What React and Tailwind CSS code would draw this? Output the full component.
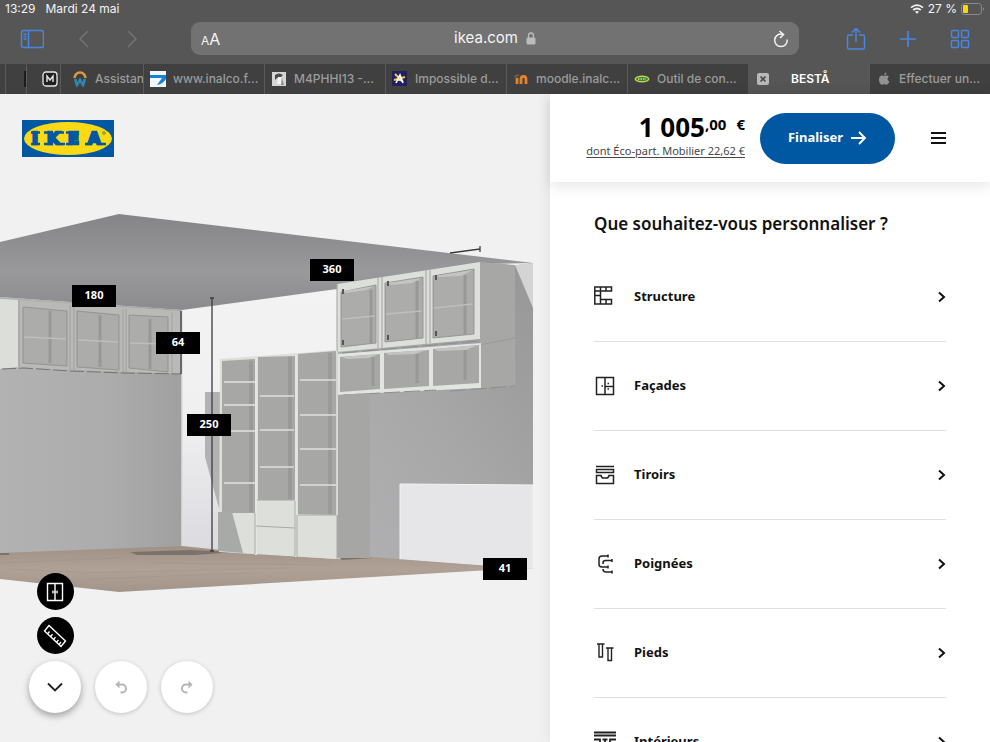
import clsx from 'clsx'

const TABS = [
  { label: 'www.inalco.f...', icon: 'inalco' },
  { label: 'M4PHHI13 -...', icon: 'statue' },
  { label: 'Impossible d...', icon: 'star' },
  { label: 'moodle.inalc...', icon: 'moodle' },
  { label: 'Outil de con...', icon: 'ikea' },
  { label: 'BESTÅ', icon: 'close', active: true },
  { label: 'Effectuer un...', icon: 'apple' },
]

const OPTIONS = ['Structure', 'Façades', 'Tiroirs', 'Poignées', 'Pieds', 'Intérieurs']

const PINS = [
  { x: 72, y: 285, label: '180' },
  { x: 310, y: 259, label: '360' },
  { x: 156, y: 332, label: '64' },
  { x: 187, y: 414, label: '250' },
  { x: 483, y: 558, label: '41' },
]

// open compartments and glass panes, as polygon points
const GLASS = [
  '23,307 67,311 67,366 23,363',
  '77,311 119,315 119,370 77,367',
  '129,315 168,317 168,372 129,368',
  '341,292 376,285 376,343 341,347',
  '385,283 423,277 423,338 385,342',
  '433,276 474,269 474,334 433,338',
]

const NICHES = [
  '340,357 380,354 380,389 340,392',
  '384,353 429,350 429,386 384,389',
  '433,349 479,345 479,383 433,386',
  '222,361 255,359 255,513 222,513',
  '258,357 295,356 295,500 258,500',
  '298,354 336,351 336,515 298,514',
]

const SHELVES = [
  [224, 255, 382], [224, 255, 405], [224, 255, 431], [224, 255, 483],
  [260, 294, 396], [260, 294, 430], [260, 294, 467],
  [300, 336, 380], [300, 336, 415], [300, 336, 449], [300, 336, 485],
]

function Favicon({ name }) {
  return (
    <svg viewBox="0 0 16 16" className="size-4 shrink-0">
      {name === 'inalco' && (
        <>
          <path d="M0 0h16v16H0z" fill="#f4f7fa" />
          <path d="M0 4h16v4q-3 5-9 6l5-7H0z" fill="#1583d2" />
        </>
      )}
      {name === 'statue' && (
        <>
          <path d="M1 1h14v14H1z" fill="#d5d5d5" />
          <path d="M4 4q4-3 8 0l-2 2H9l-3 1-2 2z" fill="#4a4a4a" />
          <path d="M7 6h3v7H6z" fill="#f3f3f3" />
          <path d="m11 7 2 7h-3z" fill="#8d8d8d" />
        </>
      )}
      {name === 'star' && (
        <>
          <path d="M0 0h15v15H0z" fill="#20215f" />
          <path d="m3 3 8 8M2 9l11-3" stroke="#f3c64b" strokeWidth="2" />
          <path d="m4 12 4-8 3 8M5 9h5" stroke="#fff" strokeWidth="1.600" fill="none" />
        </>
      )}
      {name === 'moodle' && (
        <>
          <path d="M4 13V7M8 13V8q0-2.500 2.500-2.500T13 8v5" stroke="#e8832a" strokeWidth="2.800" fill="none" />
          <path d="m0 6 4-3 3 1-4 3z" fill="#6b5a50" />
        </>
      )}
      {name === 'ikea' && (
        <>
          <ellipse cx="8" cy="8" rx="7.500" ry="3.500" fill="#c9d43a" />
          <ellipse cx="8" cy="8" rx="6" ry="2" fill="#2f7d55" />
          <path d="M4 8h8" stroke="#dfe04a" strokeWidth="1.500" strokeDasharray="1.500 1" />
        </>
      )}
      {name === 'close' && (
        <>
          <rect x="2" y="2" width="12" height="12" rx="2" fill="#b9b9b9" />
          <path d="m5.500 5.500 5 5m0-5-5 5" stroke="#4c4c4c" strokeWidth="1.700" />
        </>
      )}
      {name === 'apple' && (
        <path
          d="M10.500 1.500c0 1.500-1 2.700-2.500 2.800 0-1.500 1-2.600 2.500-2.800zM8 5c.8 0 1.500-.6 2.600-.6 1 0 1.900.5 2.400 1.200-2 1.200-1.700 4 .3 4.800-.5 1.500-1.700 3.300-2.900 3.300-.9 0-1.200-.5-2.300-.5s-1.500.5-2.300.5C4.300 13.700 3 11 3 8.600c0-2.500 1.500-4.100 3.100-4.100C7 4.500 7.500 5 8 5z"
          fill="#929292"
        />
      )}
    </svg>
  )
}

function StatusBar() {
  return (
    <div className="flex h-[18px] items-center justify-between px-[5px] text-xs text-[#f4f4f4]">
      <div className="flex gap-[10px]">
        <span>13:29</span>
        <span>Mardi 24 mai</span>
      </div>
      <div className="flex items-center gap-1">
        <svg viewBox="0 0 14 10" className="h-[10px] w-[14px]" fill="none" stroke="#f4f4f4" strokeWidth="1.800">
          <path d="M1 3.600q6-5 12 0M3.200 6q3.800-3 7.600 0" />
          <path d="M7 9.800 5 7.800q2-1.600 4 0z" fill="#f4f4f4" stroke="none" />
        </svg>
        <span>27 %</span>
        <svg viewBox="0 0 24 12" className="h-3 w-6">
          <rect x="0.500" y="0.500" width="20" height="11" rx="3" fill="none" stroke="#8a8a8a" />
          <rect x="2" y="2" width="5" height="8" rx="1" fill="#fdd60a" />
          <path d="M22 4q2 2 0 4z" fill="#8a8a8a" />
        </svg>
      </div>
    </div>
  )
}

function Toolbar() {
  return (
    <div className="flex h-[46px] items-start pt-1">
      <div className="flex h-[33px] w-[191px] items-center pl-5">
        <button aria-label="Barre latérale">
          <svg viewBox="0 0 24 20" className="h-5 w-6" fill="none" stroke="#4a86e0" strokeWidth="1.500">
            <rect x="1.500" y="1.500" width="22" height="17" rx="2" />
            <path d="M8.500 1.500v17M3.500 5h3M3.500 7.500h3M3.500 10h3" />
          </svg>
        </button>
        <button aria-label="Page précédente" className="ml-[34px]">
          <svg viewBox="0 0 12 18" className="h-[18px] w-3" fill="none" stroke="#737373" strokeWidth="1.600">
            <path d="m10 1-8 8 8 8" />
          </svg>
        </button>
        <button aria-label="Page suivante" className="ml-9">
          <svg viewBox="0 0 12 18" className="h-[18px] w-3" fill="none" stroke="#737373" strokeWidth="1.600">
            <path d="m2 1 8 8-8 8" />
          </svg>
        </button>
      </div>
      <div className="flex h-[33px] flex-1 items-center justify-between rounded-[9px] bg-[#727272] px-[10px] text-[#f5f5f5]">
        <button aria-label="Taille du texte" className="flex w-10 items-baseline">
          <span className="text-xs">A</span>
          <span className="text-base">A</span>
        </button>
        <div className="flex items-center gap-2 text-[15px]">
          ikea.com
          <svg viewBox="0 0 10 13" className="h-[13px] w-[10px]">
            <rect x="0.500" y="5.500" width="9" height="7" rx="1.500" fill="#bcbcbf" />
            <path d="M2.500 6V3.500a2.500 2.500 0 0 1 5 0V6" fill="none" stroke="#bcbcbf" strokeWidth="1.300" />
          </svg>
        </div>
        <button aria-label="Recharger" className="flex w-10 justify-end">
          <svg viewBox="0 0 16 18" className="h-[18px] w-4" fill="none" stroke="#f5f5f5" strokeWidth="1.500">
            <path d="M14.200 9.500A6.300 6.300 0 1 1 9.500 4.200" />
            <path d="m6.500 1 4 3.500L7 8" />
          </svg>
        </button>
      </div>
      <div className="flex h-[33px] w-[191px] items-center justify-end pr-5">
        <button aria-label="Partager">
          <svg viewBox="0 0 20 24" className="h-6 w-5" fill="none" stroke="#4a86e0" strokeWidth="1.500">
            <path d="M7 8H3a1.500 1.500 0 0 0-1.500 1.500v11A1.500 1.500 0 0 0 3 22h14a1.500 1.500 0 0 0 1.500-1.500v-11A1.500 1.500 0 0 0 17 8h-4M10 15V1.500M6 5.500l4-4 4 4" />
          </svg>
        </button>
        <button aria-label="Nouvel onglet" className="ml-[34px]">
          <svg viewBox="0 0 16 16" className="size-4" fill="none" stroke="#4a86e0" strokeWidth="1.600">
            <path d="M8 0v16M0 8h16" />
          </svg>
        </button>
        <button aria-label="Tous les onglets" className="ml-[34px]">
          <svg viewBox="0 0 20 20" className="size-5" fill="none" stroke="#4a86e0" strokeWidth="1.500">
            <rect x="1.500" y="1.500" width="7" height="7" rx="1" />
            <rect x="11.500" y="1.500" width="7" height="7" rx="1" />
            <rect x="1.500" y="11.500" width="7" height="7" rx="1" />
            <rect x="11.500" y="11.500" width="7" height="7" rx="1" />
          </svg>
        </button>
      </div>
    </div>
  )
}

function TabBar() {
  return (
    <nav className="flex h-[30px] bg-[#404040] text-xs font-medium text-[#9c9c9c]">
      <div className="w-[6px] border-r border-[#5a5a5a]" />
      <div className="flex w-[21px] items-center justify-end border-r border-[#5a5a5a]">
        <div className="h-4 w-[2px] bg-[#1c1c1c]" />
      </div>
      <a href="#m" aria-label="M" className="flex w-[34px] items-center justify-end border-r border-[#5a5a5a] pr-[2px]">
        <svg viewBox="0 0 16 16" className="size-4">
          <rect x="1" y="1" width="14" height="14" rx="3" fill="#1f1f1f" stroke="#e8e8e8" strokeWidth="1.300" />
          <path d="M5 11V5l3 4 3-4v6" fill="none" stroke="#e8e8e8" strokeWidth="1.400" />
        </svg>
      </a>
      <a href="#assistant" className="flex w-[82px] items-center gap-2 overflow-hidden pl-3">
        <svg viewBox="0 0 14 16" className="h-4 w-[14px] shrink-0" fill="none">
          <path d="M1.500 7a5.500 5.500 0 0 1 11 0" stroke="#d79a45" strokeWidth="2.500" />
          <path d="m2 8 2 6 3-5 3 5 2-6" stroke="#2f87ae" strokeWidth="2.500" />
        </svg>
        Assistant
      </a>
      {TABS.map(({ label, icon, active }) => (
        <a
          key={label}
          href={`#${icon}`}
          className={clsx(
            'flex min-w-0 flex-1 items-center overflow-hidden whitespace-nowrap border-l pl-[6px]',
            active ? 'border-[#565656] bg-[#565656] font-semibold text-white' : 'border-[#5a5a5a]',
          )}
        >
          <Favicon name={icon} />
          <span className={active ? 'ml-5' : 'ml-[7px]'}>{label}</span>
        </a>
      ))}
    </nav>
  )
}

function Room() {
  return (
    <svg viewBox="0 94 550 648" className="absolute top-0 left-0 w-full">
      <defs>
        <linearGradient id="ceiling" x1="0" y1="0" x2="0" y2="1">
          <stop offset="0" stopColor="#858588" />
          <stop offset="0.600" stopColor="#99999c" />
          <stop offset="1" stopColor="#8b8b8e" />
        </linearGradient>
        <linearGradient id="leftWall" x1="0" y1="0" x2="1" y2="0">
          <stop offset="0" stopColor="#b3b2b2" />
          <stop offset="0.600" stopColor="#adacad" />
          <stop offset="1" stopColor="#a0a0a1" />
        </linearGradient>
        <linearGradient id="backWall" x1="0" y1="0" x2="0" y2="1">
          <stop offset="0" stopColor="#f3f3f3" />
          <stop offset="0.500" stopColor="#f0f0f1" />
          <stop offset="1" stopColor="#d9d9de" />
        </linearGradient>
        <linearGradient id="rightWall" x1="0" y1="1" x2="1" y2="0">
          <stop offset="0" stopColor="#b1b1b3" />
          <stop offset="0.500" stopColor="#a8a7a8" />
          <stop offset="1" stopColor="#989798" />
        </linearGradient>
        <linearGradient id="floor" x1="0" y1="0" x2="0" y2="1">
          <stop offset="0" stopColor="#9f9186" />
          <stop offset="0.500" stopColor="#afa195" />
          <stop offset="1" stopColor="#a39589" />
        </linearGradient>
      </defs>

      <path d="M0 297 182 310V547L0 554z" fill="url(#leftWall)" />
      <path d="M182 310 345 280V560L182 547z" fill="url(#backWall)" />
      <path d="M182 310V547" stroke="#dedee0" strokeWidth="1.500" />
      <path d="M337 290 533 263V569L337 558z" fill="url(#rightWall)" />
      <path d="M515 265 533 263V308z" fill="#d4d4d5" />
      <path d="M0 242 119 214 533 263 480 264 337 289 182 310 0 297z" fill="url(#ceiling)" />
      <path d="M400 484 533 485V569L400 560z" fill="#e6e6e8" />
      <path d="M400 560V484L533 485V568" fill="none" stroke="#f3f3f5" />
      <path d="M205 392H221V512L218 505 205 457z" fill="#b2b2b4" />

      <path d="M0 553 182 546 250 553 337 559 371 557 490 566V570L119 592 0 579z" fill="url(#floor)" />
      <path d="m0 563 120-5m30 5 180 2m-250 8 210-5m-200 11 160-6m-240-4 70 3" stroke="#988a80" strokeOpacity="0.300" />
      <path d="m130 552 60-2 45 2-40 3-58 0zM0 553h9v2H0zM340 558l28-1 4 1-30 2z" fill="#7d7269" />

      {/* wall cabinets, left */}
      <path d="M0 299 182 311V374L0 367z" fill="#b9bab7" />
      <path d="M0 299 18 300V367L0 369z" fill="#dcded9" />
      <path d="M19 300V367M70 305V370M74 305V370M123 309V372M126 309V372M172 312V374" stroke="#a1a29f" />
      <path d="m2 369 22-1 46 3 54 2 57 1" fill="none" stroke="#747572" strokeDasharray="14 3" />

      {/* wall cabinets, right */}
      <path d="M480 262 515 265V386L480 388z" fill="#a7a8a6" />
      <path d="M480 345 515 338" stroke="#9b9c9a" />
      <path d="M337 284 480 262V339L337 352z" fill="#dddfda" />
      <path d="M337 284V352M378 277V348M382 276V348M426 270V344M430 270V343" stroke="#a3a4a1" />
      <path d="M337 354 481 343V388L337 395z" fill="#e2e4df" />
      <path d="m342 353 138-12M344 395l92-5M450 391l65-5" stroke="#8e8f8c" strokeDasharray="16 4" />

      {/* tall units */}
      <path d="M337 395 370 393V558H337z" fill="#a6a7a5" />
      <path d="M220 359 337 350V559L219 552z" fill="#dddfda" />
      {GLASS.map((points) => (
        <polygon key={points} points={points} fill="#acadab" stroke="#8b8c89" strokeWidth="0.800" />
      ))}
      {NICHES.map((points) => (
        <polygon key={points} points={points} fill="#a7a8a5" />
      ))}
      <path d="M251 361V512M290 357V499M330 353V514" stroke="#9a9b98" strokeWidth="4" />
      <path d="M50 311V363M100 315V367M150 319V369M371 290V343M417 281V338M465 275V334M373 357V386M417 354V383M465 349V380" stroke="#989996" strokeWidth="3" />
      <path d="M24 337 66 339M78 340 118 342M130 343 167 344M342 319 375 316M386 314 422 311M434 308 473 304" stroke="#bebfbc" strokeWidth="1.500" />
      <path d="m343 291 32-5-9 4-20 3zM387 283l35-5-10 5-21 2zM435 276l38-6-12 6-22 1zM342 357l37-3-10 4-22 1zM386 353l41-3-12 4-26 1zM435 349l43-4-12 5-29 1z" fill="#c4c5c2" />
      <path d="M343 289v5M343 340v5M388 281v5M388 335v5M436 275v5M436 331v5" stroke="#555653" strokeWidth="2" />
      {SHELVES.map(([x1, x2, y]) => (
        <path key={`${x1}-${y}`} d={`M${x1} ${y}H${x2}`} stroke="#dfe1dc" strokeWidth="1.600" />
      ))}
      <path d="M256 358V555M296 355V557" stroke="#e4e6e1" strokeWidth="2" />
      <path d="M337 352V515" stroke="#d5d7d2" strokeWidth="2" />
      <path d="M218 512H232L243 553 218 551z" fill="#a8aaa8" />
      <path d="M255 513V554M256 526 295 528M295 501V556M297 515V557M337 515V559M257 500H295M298 515H336" fill="none" stroke="#a9aba7" />

      {/* measuring lines */}
      <path d="M181 311V374M212 298V551M450 253 480 249M480 246V252M210 298h4M210 551h4" stroke="#3d3d3f" strokeWidth="1.300" />

      {PINS.map(({ x, y, label }) => (
        <g key={label}>
          <rect x={x} y={y} width="44" height="22" fill="#000" />
          <text x={x + 22} y={y + 14} textAnchor="middle" className="fill-white text-[11px] font-bold">
            {label}
          </text>
        </g>
      ))}
    </svg>
  )
}

function Logo() {
  return (
    <svg viewBox="0 0 92 37" className="h-[37px] w-[92px]" role="img" aria-label="IKEA">
      <path d="M0 0h92v37H0z" fill="#0058a3" />
      <ellipse cx="46" cy="18.500" rx="44" ry="16.500" fill="#fbd914" />
      <g fill="#0058a3" stroke="#0058a3" strokeWidth="2.400" fontFamily="DejaVu Sans" fontWeight="bold" fontSize="16">
        <text x="10" y="24">I</text>
        <text x="25" y="24">K</text>
        <text x="46" y="24">E</text>
        <text x="66" y="24">A</text>
      </g>
      <path d="M9 12.500h9M9 24h9M22 12.500h9M22 24h9M34 12.500h8M35 24h8M44 12.500h6M44 24h6M63 24h7M76 24h8" stroke="#0058a3" strokeWidth="2.600" />
      <circle cx="82" cy="13" r="1.300" fill="none" stroke="#0058a3" strokeWidth="0.600" />
    </svg>
  )
}

function Viewer() {
  return (
    <section className="relative flex flex-col justify-between bg-[#f1f1f1] pt-[26px] pb-[29px]">
      <Room />
      <a href="#accueil" className="relative ml-[22px] self-start">
        <Logo />
      </a>
      <div className="relative ml-[29px] flex flex-col gap-[7px]">
        <div className="flex w-[52px] flex-col items-center gap-[7px]">
          <button aria-label="Ouvrir les portes" className="grid size-[37px] place-items-center rounded-full bg-black">
            <svg viewBox="0 0 18 20" className="h-5 w-[18px]" fill="none" stroke="#fff" strokeWidth="1.400">
              <path d="M1.500 1.500h15v17h-15zM9 1.500v17" />
              <path d="M6.800 8.500v3M11.200 8.500v3M6.800 10h4.400" strokeWidth="1" />
            </svg>
          </button>
          <button aria-label="Mesures" className="grid size-[37px] place-items-center rounded-full bg-black">
            <svg viewBox="0 0 24 24" className="size-6" fill="none" stroke="#fff" strokeWidth="1.400">
              <path d="M6 1.500 22.500 17 18 22.500 1.500 7zM4.500 10l2-2.500M7.500 12.800l2-2.500M10.500 15.600l2-2.500M13.500 18.400l2-2.500M16 20.500l2-2.500" />
            </svg>
          </button>
        </div>
        <div className="flex gap-[14px]">
          <button aria-label="Réduire" className="grid size-[52px] place-items-center rounded-full bg-white shadow-[0_3px_7px_rgba(0,0,0,0.35)]">
            <svg viewBox="0 0 16 10" className="h-[10px] w-4" fill="none" stroke="#222" strokeWidth="1.900">
              <path d="m1 1.500 7 7 7-7" />
            </svg>
          </button>
          <button aria-label="Annuler" className="grid size-[52px] place-items-center rounded-full bg-white shadow-[0_1px_4px_rgba(0,0,0,0.2)]">
            <svg viewBox="0 0 14 14" className="size-[14px]" fill="none" stroke="#b5b5b5" strokeWidth="1.900">
              <path d="M2.500 4.500H8a4 4 0 0 1 0 8H6.500" />
              <path d="M5.500.5 1.500 4.500l4 4z" fill="#b5b5b5" stroke="none" />
            </svg>
          </button>
          <button aria-label="Rétablir" className="grid size-[52px] place-items-center rounded-full bg-white shadow-[0_1px_4px_rgba(0,0,0,0.2)]">
            <svg viewBox="0 0 14 14" className="size-[14px]" fill="none" stroke="#b5b5b5" strokeWidth="1.900">
              <path d="M11.500 4.500H6a4 4 0 0 0 0 8h1.500" />
              <path d="m8.500.5 4 4-4 4z" fill="#b5b5b5" stroke="none" />
            </svg>
          </button>
        </div>
      </div>
    </section>
  )
}

function OptionIcon({ name }) {
  return (
    <svg viewBox="0 0 22 22" className="size-[22px]" fill="none" stroke="#222" strokeWidth="1.500">
      {name === 'Structure' && (
        <path d="M.8 1h16.700v4H.8zM6.500 1v13M12 1v4M.8 5v13M.8 9.500h5.700M0 18h17.500v-4.500H6.500V18M12 13.500V18" />
      )}
      {name === 'Façades' && (
        <>
          <path d="M2.500 2.500h17v17h-17zM11 2.500v17M11 11.500h8.500" />
          <path d="M7.500 11h1.500M13.500 8.500H15M13.500 14H15" />
        </>
      )}
      {name === 'Tiroirs' && (
        <path d="M2 2.500h18M2.500 5.500h17v3h-17zM2.500 19.500v-8H7q.5 2.500 2.500 2.500h3q2 0 2.500-2.500h4.500v8z" />
      )}
      {name === 'Poignées' && (
        <>
          <path d="M14 3H8Q5 3 5 6v5q0 3 3 3h6M18 7.500h-6.500Q9 7.500 9 10v1M9 16q0 3 3 3h6" />
          <path d="M14 1.500v3M14 12.500v3M18 6v3M18 17.500v3" />
        </>
      )}
      {name === 'Pieds' && (
        <path d="M3 2h7.500M5 2.500v12.500h3.500v-12.500M12 6h7.500M14 6.500v12h3.500v-12" strokeWidth="1.400" />
      )}
      {name === 'Intérieurs' && (
        <path d="M0 1.500h22M0 4.500h22M0 8.500h6v12H0M8.500 8.500h5M11 8.500v6M22 8.500h-6v12h6M3 11v4M19 11v4" strokeWidth="1.800" />
      )}
    </svg>
  )
}

function Configurator() {
  return (
    <aside className="relative flex min-w-0 flex-col bg-white shadow-[0_0_14px_rgba(0,0,0,0.08)]">
      <header className="relative flex h-[88px] shrink-0 items-center justify-end bg-white pr-11 shadow-[0_4px_14px_rgba(0,0,0,0.1)]">
        <div className="flex flex-col items-end pb-1 text-black">
          <div className="flex items-start font-bold">
            <span className="text-[26px] leading-[30px]">1 005</span>
            <span className="text-[15px] leading-6">,00</span>
            <span className="ml-[10px] text-[15px] leading-6">€</span>
          </div>
          <a href="#eco-part" className="text-[11px] leading-[18px] whitespace-nowrap text-[#484848] underline underline-offset-2">
            dont Éco-part. Mobilier 22,62 €
          </a>
        </div>
        <button className="ml-[15px] flex h-[51px] w-[135px] items-center justify-center gap-2 rounded-full bg-[#0058a3] text-[13px] font-bold text-white">
          Finaliser
          <svg viewBox="0 0 16 14" className="h-[14px] w-4" fill="none" stroke="#fff" strokeWidth="1.900">
            <path d="M0 7h14M8 1l6 6-6 6" />
          </svg>
        </button>
        <button aria-label="Menu" className="ml-9">
          <svg viewBox="0 0 15 12" className="h-3 w-[15px]" stroke="#111" strokeWidth="2">
            <path d="M0 1h15M0 6h15M0 11h15" />
          </svg>
        </button>
      </header>
      <div className="px-11 pt-[30px] text-[#111]">
        <h1 className="mb-[17px] text-[17px] leading-6 font-semibold">Que souhaitez-vous personnaliser ?</h1>
        <ul>
          {OPTIONS.map((name) => (
            <li key={name} className="border-b border-[#dfdfdf]">
              <button className="flex h-[88px] w-full items-center text-[13px] font-bold">
                <OptionIcon name={name} />
                <span className="ml-[18px]">{name}</span>
                <svg viewBox="0 0 8 12" className="ml-auto h-3 w-2" fill="none" stroke="#111" strokeWidth="2">
                  <path d="m1 1.500 5 4.500-5 4.500" />
                </svg>
              </button>
            </li>
          ))}
        </ul>
      </div>
    </aside>
  )
}

export default function App() {
  return (
    <div className="flex h-screen flex-col overflow-hidden font-['Noto_Sans',sans-serif]">
      <div className="shrink-0 bg-[#565656] font-['Inter',sans-serif]">
        <StatusBar />
        <Toolbar />
        <TabBar />
      </div>
      <main className="grid min-h-0 flex-1 grid-cols-[5fr_4fr] grid-rows-[minmax(0,1fr)]">
        <Viewer />
        <Configurator />
      </main>
    </div>
  )
}
